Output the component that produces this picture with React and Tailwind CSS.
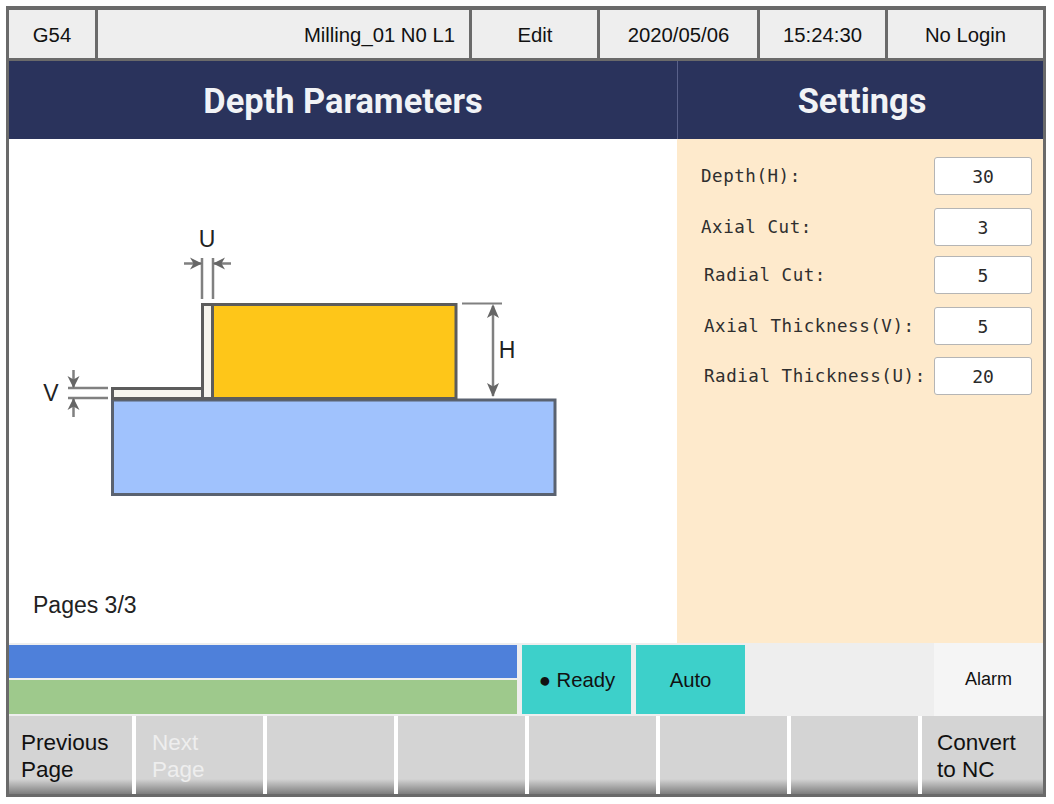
const sans = "font-['Liberation_Sans',Arial,sans-serif]";
const mono = "font-['DejaVu_Sans_Mono',monospace]";

function HeaderCell({ className, children }) {
  return <div className={`flex h-full items-center bg-[#eeeeee] pt-[2px] ${className}`}>{children}</div>;
}

function Row({ label, value, labelClass, className, textClass }) {
  return (
    <div className={`flex h-[38px] items-center justify-between ${className}`}>
      <span className={`${mono} text-[17.5px] tracking-[0.55px] text-[#2f2f2f] whitespace-pre ${labelClass} ${textClass}`}>{label}</span>
      <div className={`${mono} flex h-[38px] w-[98px] items-center justify-center rounded-[3px] border border-[#b5b5b5] bg-white text-[18px] text-[#2a2a2a] ${textClass}`}>{value}</div>
    </div>
  );
}

function Btn({ className, children, muted }) {
  return (
    <div className={`h-full bg-[linear-gradient(to_bottom,#d4d4d4_0,#d4d4d4_63px,#7e7e7e_100%)] pt-[13px] text-[22.5px] leading-[27px] ${muted ? "text-[#eeeeee]" : "text-[#111111]"} ${className}`}>
      {children}
    </div>
  );
}

function Diagram() {
  const g = "#808080";
  return (
    <svg viewBox="9 139 668 400" width="668" height="400" className="block">
      <rect x="112.5" y="400" width="442.5" height="94.5" fill="#a0c2fd" stroke="#5a6270" strokeWidth="3" />
      <rect x="112.5" y="388.5" width="90" height="10" fill="#f7f5ee" stroke="#5c5c5c" strokeWidth="3" />
      <rect x="202.5" y="304.5" width="10" height="94" fill="#f7f5ee" stroke="#5c5c5c" strokeWidth="3" />
      <rect x="212.5" y="304.5" width="243.5" height="94" fill="#fec619" stroke="#5c5c5c" strokeWidth="3" />

      <g stroke={g} strokeWidth="2.5" fill="none">
        <path d="M202 258V299M213 258V299" />
        <path d="M184 263.5H202M231 263.5H213" />
        <path d="M68 388H108M68 398H108" />
        <path d="M73.5 370V388M73.5 417V398" />
        <path d="M462 303.5H502" strokeWidth="2" />
        <path d="M493 306V396" />
      </g>
      <g fill="#666666">
        <path d="M202 263.5L190 257.5L193.5 263.5L190 269.5Z" />
        <path d="M213 263.5L225 257.5L221.5 263.5L225 269.5Z" />
        <path d="M73.5 388L67.5 376L73.5 379.5L79.5 376Z" />
        <path d="M73.5 398L67.5 410L73.5 406.5L79.5 410Z" />
        <path d="M493 304L487 318L493 314.5L499 318Z" />
        <path d="M493 397L487 383L493 386.5L499 383Z" />
      </g>
      <text x="207" y="247" textAnchor="middle" fontFamily="Liberation Sans" fontSize="23" fill="#222">U</text>
      <text x="51" y="401" textAnchor="middle" fontFamily="Liberation Sans" fontSize="23" fill="#222">V</text>
      <text x="507" y="358" textAnchor="middle" fontFamily="Liberation Sans" fontSize="23" fill="#222">H</text>
    </svg>
  );
}

export default function App() {
  return (
    <div className={`${sans} h-[804px] w-[1054px] bg-white pl-[6px] pt-[6px]`}>
      <div className="flex h-[791px] w-[1040px] flex-col border-[3px] border-t-[4px] border-[#6a6a6a] bg-white">
        {/* top bar */}
        <div className="flex h-[51px] shrink-0 border-b-[3px] border-[#6a6a6a] text-[20.3px] text-[#111111]">
          <HeaderCell className="w-[89px] justify-center border-r-[3px] border-[#6a6a6a]">G54</HeaderCell>
          <HeaderCell className="w-[374px] justify-end border-r-[3px] border-[#6a6a6a] pr-[14px]">Milling_01 N0 L1</HeaderCell>
          <HeaderCell className="w-[128px] justify-center border-r-[3px] border-[#6a6a6a] pl-[1px]">Edit</HeaderCell>
          <HeaderCell className="w-[160px] justify-center border-r-[3px] border-[#6a6a6a]">2020/05/06</HeaderCell>
          <HeaderCell className="w-[128px] justify-center border-r-[3px] border-[#6a6a6a]">15:24:30</HeaderCell>
          <HeaderCell className="flex-1 justify-center">No Login</HeaderCell>
        </div>

        {/* titles */}
        <div className="flex h-[78px] shrink-0 bg-[#2a335c] pt-[3px] font-['Roboto',sans-serif] text-[34.4px] font-bold text-[#f1f3f6]">
          <div className="flex w-[668px] items-center justify-center">Depth Parameters</div>
          <div className="-mt-[3px] flex flex-1 items-center justify-center border-l border-[#59618a] pl-[3px] pt-[3px]">Settings</div>
        </div>

        {/* body */}
        <div className="flex h-[504px] shrink-0">
          <div className="flex w-[668px] flex-col justify-between bg-white">
            <Diagram />
            <div className="pb-[24px] pl-[24px] text-[23px] leading-[27px] text-[#222222]">Pages 3/3</div>
          </div>
          <div className="flex-1 bg-[#feeacc] pl-[24px] pr-[11px] pt-[18px]">
            <Row label="Depth(H):" value="30" textClass="pt-[1px]" />
            <Row label="Axial Cut:" value="3" textClass="pt-[1px]" className="mt-[13px]" />
            <Row label="Radial Cut:" value="5" textClass="pt-[1px]" labelClass="ml-[3px]" className="mt-[10px]" />
            <Row label="Axial Thickness(V):" value="5" labelClass="ml-[3px]" className="mt-[13px]" />
            <Row label="Radial Thickness(U):" value="20" labelClass="ml-[3px]" className="mt-[12px]" />
          </div>
        </div>

        {/* status */}
        <div className="flex h-[73px] shrink-0 bg-[#eeeeee] pt-[2px] pb-[2px] text-[20.3px] text-[#111111]">
          <div className="flex w-[508px] flex-col gap-[2px]">
            <div className="h-[33px] bg-[#4e80da]" />
            <div className="flex-1 bg-[#9ec98c]" />
          </div>
          <div className="ml-[5px] flex w-[109px] items-center justify-center bg-[#3dd0ca] pl-[1px] pt-[2px]">● Ready</div>
          <div className="ml-[5px] flex w-[109px] items-center justify-center bg-[#3dd0ca] pt-[2px]">Auto</div>
          <div className="flex-1" />
          <div className="-mt-[2px] -mb-[2px] flex w-[109px] items-center justify-center bg-[#f5f5f5] text-[18px]">Alarm</div>
        </div>

        {/* soft keys */}
        <div className="flex min-h-0 flex-1 gap-[4px]">
          <Btn className="w-[123px] pl-[12px]">Previous<br />Page</Btn>
          <Btn muted className="w-[127px] pl-[16px]">Next<br />Page</Btn>
          <Btn className="w-[127px]" />
          <Btn className="w-[127px]" />
          <Btn className="w-[127px]" />
          <Btn className="w-[127px]" />
          <Btn className="w-[127px]" />
          <Btn className="flex-1 bg-[linear-gradient(to_bottom,#cccccc_0,#cccccc_63px,#7e7e7e_100%)] pl-[15px]">Convert<br />to NC</Btn>
        </div>
      </div>
    </div>
  );
}
